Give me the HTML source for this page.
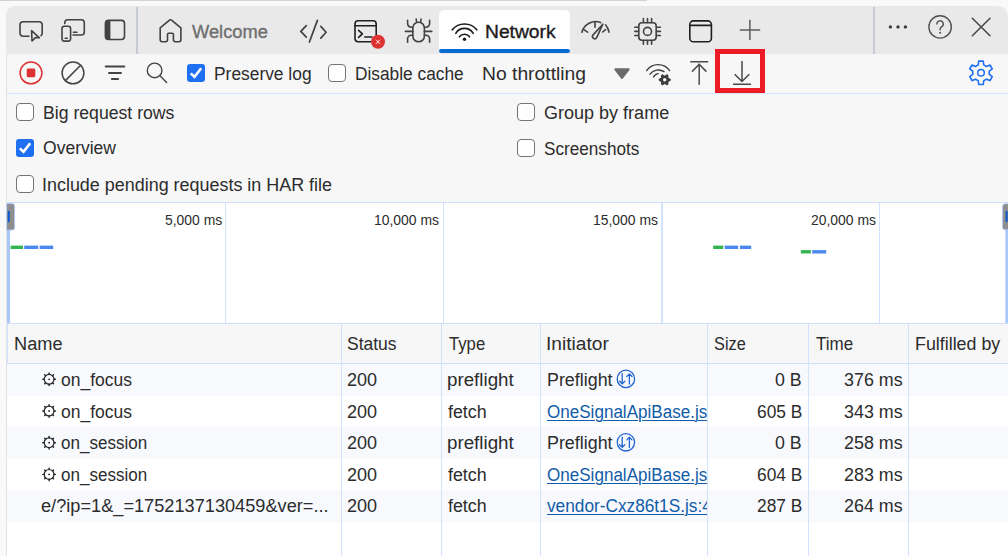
<!DOCTYPE html>
<html><head><meta charset="utf-8">
<style>
*{box-sizing:border-box;margin:0;padding:0}
html,body{width:1008px;height:556px;overflow:hidden;background:#f9f9f9;font-family:"Liberation Sans",sans-serif;color:#1b1b1b;position:relative}
.a{position:absolute}
.t{position:absolute;white-space:pre;line-height:20px}
.cb{position:absolute;width:18px;height:18px;border:1.7px solid #747474;border-radius:4px;background:#fff}
.sb{-webkit-text-stroke:0.35px currentColor}
.lnk{text-decoration:underline;text-decoration-thickness:1px;text-underline-offset:2px}
.clip{position:absolute;left:541px;width:166px;height:31px;overflow:hidden}
#ov{position:absolute;left:0;top:0;width:1008px;height:556px;overflow:visible}
</style></head><body>
<!-- chrome -->
<div class="a" style="left:0;top:0;width:647px;height:1px;background:#d2d2d2;border-radius:0 1px 1px 0"></div>
<div class="a" style="left:6px;top:6px;width:1002px;height:47.6px;background:#e9e9e9;border-radius:9px 10px 0 0"></div>
<div class="a" style="left:6px;top:53.6px;width:1002px;height:503px;background:#f7f7f7;border-left:1px solid #e2e2e2"></div>
<div class="a" style="left:7px;top:93px;width:1001px;height:1px;background:#d6e5fc"></div>
<!-- timeline -->
<div class="a" style="left:7px;top:202px;width:1001px;height:121px;background:#fff;border-top:1px solid #cddffb"></div>
<div class="a" style="left:224.6px;top:203px;width:1.4px;height:120px;background:#d3e3fd"></div>
<div class="a" style="left:442.6px;top:203px;width:1.6px;height:120px;background:#d3e3fd"></div>
<div class="a" style="left:661.2px;top:203px;width:1.6px;height:120px;background:#d3e3fd"></div>
<div class="a" style="left:879.2px;top:203px;width:1.2px;height:120px;background:#d3e3fd"></div>
<!-- table -->
<div class="a" style="left:7px;top:323px;width:1001px;height:41px;background:#f7f7f7;border-top:1px solid #cddffb;border-bottom:1px solid #cddffb;border-left:1px solid #d3e3fd"></div>
<div class="a" style="left:7px;top:364px;width:1001px;height:192px;background:#fff"></div>
<div class="a" style="left:7px;top:364px;width:1001px;height:31.5px;background:#f7f9fd"></div>
<div class="a" style="left:7px;top:427px;width:1001px;height:31.5px;background:#f7f9fd"></div>
<div class="a" style="left:7px;top:490px;width:1001px;height:31.5px;background:#f7f9fd"></div>
<div class="a" style="left:341px;top:324px;width:1px;height:232px;background:#d3e3fd"></div>
<div class="a" style="left:441px;top:324px;width:1px;height:232px;background:#d3e3fd"></div>
<div class="a" style="left:540px;top:324px;width:1px;height:232px;background:#d3e3fd"></div>
<div class="a" style="left:707px;top:324px;width:1px;height:232px;background:#d3e3fd"></div>
<div class="a" style="left:808px;top:324px;width:1px;height:232px;background:#d3e3fd"></div>
<div class="a" style="left:908px;top:324px;width:1px;height:232px;background:#d3e3fd"></div>
<!-- tab strip -->
<div class="a" style="left:136.2px;top:7px;width:1.6px;height:47px;background:#c5cad3"></div>
<div class="a" style="left:873.4px;top:7px;width:1.6px;height:47px;background:#c5cad3"></div>
<div class="a" style="left:439px;top:10px;width:131px;height:43px;background:#fff;border-radius:5px 5px 0 0"></div>
<div class="a" style="left:439px;top:49px;width:131px;height:4px;background:#0a6cd2;border-radius:2px"></div>
<!-- checkboxes -->
<div class="a" style="left:187px;top:64px;width:18px;height:18px;border-radius:3px;background:#1f6ff2"></div>
<div class="cb" style="left:328px;top:64px"></div>
<div class="cb" style="left:16px;top:103px"></div>
<div class="a" style="left:16px;top:139px;width:18px;height:18px;border-radius:3px;background:#1f6ff2"></div>
<div class="cb" style="left:16px;top:175px"></div>
<div class="cb" style="left:517px;top:103px"></div>
<div class="cb" style="left:517px;top:139px"></div>
<div class="t sb" style="left:191.90px;top:21.60px;font-size:17.6px;color:#6f6f6f;transform:scaleX(1.0389);transform-origin:left center">Welcome</div>
<div class="t sb" style="left:485.41px;top:21.60px;font-size:17.6px;color:#1b1b1b;transform:scaleX(1.0937);transform-origin:left center">Network</div>
<div class="t" style="left:213.71px;top:63.70px;font-size:17.6px;color:#2c2c2c;transform:scaleX(0.9876);transform-origin:left center">Preserve log</div>
<div class="t" style="left:354.72px;top:63.50px;font-size:17.6px;color:#2c2c2c;transform:scaleX(0.9835);transform-origin:left center">Disable cache</div>
<div class="t" style="left:482.40px;top:63.60px;font-size:17.6px;color:#2c2c2c;transform:scaleX(1.0968);transform-origin:left center">No throttling</div>
<div class="t" style="left:43.00px;top:102.70px;font-size:17.6px;color:#2c2c2c;transform:scaleX(1.0031);transform-origin:left center">Big request rows</div>
<div class="t" style="left:43.00px;top:138.40px;font-size:17.6px;color:#2c2c2c;transform:scaleX(0.9958);transform-origin:left center">Overview</div>
<div class="t" style="left:41.86px;top:174.70px;font-size:17.6px;color:#2c2c2c;transform:scaleX(1.0191);transform-origin:left center">Include pending requests in HAR file</div>
<div class="t" style="left:543.58px;top:102.80px;font-size:17.6px;color:#2c2c2c;transform:scaleX(1.0240);transform-origin:left center">Group by frame</div>
<div class="t" style="left:543.62px;top:138.50px;font-size:17.6px;color:#2c2c2c;transform:scaleX(0.9750);transform-origin:left center">Screenshots</div>
<div class="t" style="left:164.66px;top:210.35px;font-size:14px;color:#2c2c2c;transform:scaleX(0.9929);transform-origin:left center">5,000 ms</div>
<div class="t" style="left:374.06px;top:210.35px;font-size:14px;color:#2c2c2c;transform:scaleX(0.9929);transform-origin:left center">10,000 ms</div>
<div class="t" style="left:593.06px;top:210.35px;font-size:14px;color:#2c2c2c;transform:scaleX(0.9929);transform-origin:left center">15,000 ms</div>
<div class="t" style="left:810.56px;top:210.35px;font-size:14px;color:#2c2c2c;transform:scaleX(0.9929);transform-origin:left center">20,000 ms</div>
<div class="t" style="left:13.67px;top:334.10px;font-size:17.6px;color:#2c2c2c;transform:scaleX(1.0333);transform-origin:left center">Name</div>
<div class="t" style="left:347.31px;top:334.10px;font-size:17.6px;color:#2c2c2c;transform:scaleX(0.9938);transform-origin:left center">Status</div>
<div class="t" style="left:448.60px;top:334.10px;font-size:17.6px;color:#2c2c2c;transform:scaleX(0.9486);transform-origin:left center">Type</div>
<div class="t" style="left:545.52px;top:334.10px;font-size:17.6px;color:#2c2c2c;transform:scaleX(1.0893);transform-origin:left center">Initiator</div>
<div class="t" style="left:713.77px;top:334.10px;font-size:17.6px;color:#2c2c2c;transform:scaleX(0.9273);transform-origin:left center">Size</div>
<div class="t" style="left:816.20px;top:334.10px;font-size:17.6px;color:#2c2c2c;transform:scaleX(0.9658);transform-origin:left center">Time</div>
<div class="t" style="left:914.59px;top:334.10px;font-size:17.6px;color:#2c2c2c;transform:scaleX(1.0133);transform-origin:left center">Fulfilled by</div>
<div class="t" style="left:61.01px;top:369.80px;font-size:17.6px;color:#2c2c2c;transform:scaleX(0.9929);transform-origin:left center">on_focus</div>
<div class="t" style="left:347.28px;top:369.80px;font-size:17.6px;color:#2c2c2c;transform:scaleX(1.0250);transform-origin:left center">200</div>
<div class="t" style="left:447.23px;top:369.80px;font-size:17.6px;color:#2c2c2c;transform:scaleX(1.0661);transform-origin:left center">preflight</div>
<div class="t" style="left:546.78px;top:369.80px;font-size:17.6px;color:#2c2c2c;transform:scaleX(1.0156);transform-origin:left center">Preflight</div>
<div class="t" style="left:775.43px;top:369.80px;font-size:17.6px;color:#2c2c2c;transform:scaleX(1.0102);transform-origin:left center">0 B</div>
<div class="t" style="left:843.78px;top:369.80px;font-size:17.6px;color:#2c2c2c;transform:scaleX(1.0161);transform-origin:left center">376 ms</div>
<div class="t" style="left:61.01px;top:401.50px;font-size:17.6px;color:#2c2c2c;transform:scaleX(0.9929);transform-origin:left center">on_focus</div>
<div class="t" style="left:347.28px;top:401.50px;font-size:17.6px;color:#2c2c2c;transform:scaleX(1.0250);transform-origin:left center">200</div>
<div class="t" style="left:448.30px;top:401.50px;font-size:17.6px;color:#2c2c2c;transform:scaleX(1.0135);transform-origin:left center">fetch</div>
<div class="clip" style="top:397px"><div class="t lnk" style="left:5.83px;top:4.50px;font-size:17.6px;color:#115ca8;transform:scaleX(0.9695);transform-origin:left center">OneSignalApiBase.js</div></div>
<div class="t" style="left:757.31px;top:401.50px;font-size:17.6px;color:#2c2c2c;transform:scaleX(0.9864);transform-origin:left center">605 B</div>
<div class="t" style="left:843.78px;top:401.50px;font-size:17.6px;color:#2c2c2c;transform:scaleX(1.0161);transform-origin:left center">343 ms</div>
<div class="t" style="left:61.03px;top:433.20px;font-size:17.6px;color:#2c2c2c;transform:scaleX(0.9678);transform-origin:left center">on_session</div>
<div class="t" style="left:347.28px;top:433.20px;font-size:17.6px;color:#2c2c2c;transform:scaleX(1.0250);transform-origin:left center">200</div>
<div class="t" style="left:447.23px;top:433.20px;font-size:17.6px;color:#2c2c2c;transform:scaleX(1.0661);transform-origin:left center">preflight</div>
<div class="t" style="left:546.78px;top:433.20px;font-size:17.6px;color:#2c2c2c;transform:scaleX(1.0156);transform-origin:left center">Preflight</div>
<div class="t" style="left:775.43px;top:433.20px;font-size:17.6px;color:#2c2c2c;transform:scaleX(1.0102);transform-origin:left center">0 B</div>
<div class="t" style="left:843.78px;top:433.20px;font-size:17.6px;color:#2c2c2c;transform:scaleX(1.0161);transform-origin:left center">258 ms</div>
<div class="t" style="left:61.03px;top:465.00px;font-size:17.6px;color:#2c2c2c;transform:scaleX(0.9678);transform-origin:left center">on_session</div>
<div class="t" style="left:347.28px;top:465.00px;font-size:17.6px;color:#2c2c2c;transform:scaleX(1.0250);transform-origin:left center">200</div>
<div class="t" style="left:448.30px;top:465.00px;font-size:17.6px;color:#2c2c2c;transform:scaleX(1.0135);transform-origin:left center">fetch</div>
<div class="clip" style="top:460px"><div class="t lnk" style="left:5.83px;top:5.00px;font-size:17.6px;color:#115ca8;transform:scaleX(0.9695);transform-origin:left center">OneSignalApiBase.js</div></div>
<div class="t" style="left:757.31px;top:465.00px;font-size:17.6px;color:#2c2c2c;transform:scaleX(0.9864);transform-origin:left center">604 B</div>
<div class="t" style="left:843.78px;top:465.00px;font-size:17.6px;color:#2c2c2c;transform:scaleX(1.0161);transform-origin:left center">283 ms</div>
<div class="t" style="left:40.67px;top:496.10px;font-size:17.6px;color:#2c2c2c;transform:scaleX(1.0333);transform-origin:left center">e/?ip=1&amp;_=1752137130459&amp;ver=...</div>
<div class="t" style="left:347.28px;top:496.10px;font-size:17.6px;color:#2c2c2c;transform:scaleX(1.0250);transform-origin:left center">200</div>
<div class="t" style="left:448.30px;top:496.10px;font-size:17.6px;color:#2c2c2c;transform:scaleX(1.0135);transform-origin:left center">fetch</div>
<div class="clip" style="top:491px"><div class="t lnk" style="left:6.00px;top:5.10px;font-size:17.6px;color:#115ca8;transform:scaleX(0.9800);transform-origin:left center">vendor-Cxz86t1S.js:4</div></div>
<div class="t" style="left:757.31px;top:496.10px;font-size:17.6px;color:#2c2c2c;transform:scaleX(0.9864);transform-origin:left center">287 B</div>
<div class="t" style="left:843.78px;top:496.10px;font-size:17.6px;color:#2c2c2c;transform:scaleX(1.0161);transform-origin:left center">264 ms</div>
<svg id="ov" width="1008" height="556" viewBox="0 0 1008 556" fill="none" stroke-linecap="round" stroke-linejoin="round">
<!-- inspect -->
<g stroke="#424242" stroke-width="1.6">
<path d="M29 36.2 H23 a3 3 0 0 1 -3 -3 V24.8 a3 3 0 0 1 3 -3 H39.2 a3 3 0 0 1 3 3 V33.2 a3 3 0 0 1 -1.2 2.4"/>
<path d="M31.6 30.6 L39.4 37.8 L35.4 37.6 L32 41 Z"/>
</g>
<!-- device -->
<g stroke="#424242" stroke-width="1.6">
<path d="M64.8 23.6 V22.8 a3 3 0 0 1 3 -3 H81.3 a3 3 0 0 1 3 3 V32 a3 3 0 0 1 -3 3 H73"/>
<rect x="62" y="26.3" width="8.6" height="14.8" rx="2.3"/>
<path d="M73.4 32.3 H76.9 M65.2 38.3 H67.3"/>
</g>
<!-- sidebar -->
<g stroke="#424242" stroke-width="1.6">
<rect x="105.4" y="20.4" width="19.1" height="19.1" rx="3.2"/>
</g>
<path d="M108.6 20.4 H110.4 V39.5 H108.6 a3.2 3.2 0 0 1 -3.2 -3.2 V23.6 a3.2 3.2 0 0 1 3.2 -3.2Z" fill="#424242"/>
<!-- home -->
<path stroke="#424242" stroke-width="1.6" d="M169.2 20.3 L160.2 27.8 V39.8 a1.9 1.9 0 0 0 1.9 1.9 H165.6 a1.9 1.9 0 0 0 1.9 -1.9 V34.4 a1.2 1.2 0 0 1 1.2 -1.2 H172.2 a1.2 1.2 0 0 1 1.2 1.2 V39.8 a1.9 1.9 0 0 0 1.9 1.9 H179 a1.9 1.9 0 0 0 1.9 -1.9 V27.8 L171.8 20.3 Q170.5 19.2 169.2 20.3 Z"/>
<!-- code -->
<g stroke="#424242" stroke-width="1.7">
<path d="M306.3 25.6 L300.8 31.3 L306.3 37.2"/>
<path d="M317.4 20.4 L309.4 42"/>
<path d="M320.8 26.4 L326.1 32.2 L320.8 38.1"/>
</g>
<!-- console -->
<g stroke="#1f1f1f" stroke-width="1.6">
<path d="M376.2 35 V24 a3.2 3.2 0 0 0 -3.2 -3.2 H358.2 a3.2 3.2 0 0 0 -3.2 3.2 V38.6 a3.2 3.2 0 0 0 3.2 3.2 H371"/>
<path d="M355 25.7 H376.2"/>
<path d="M358.6 30.3 L362.4 33.8 L358.6 37.4"/>
<path d="M364.8 37 H372"/>
</g>
<circle cx="378" cy="41.8" r="7" fill="#dc3232"/>
<path d="M376.2 40 L379.8 43.6 M379.8 40 L376.2 43.6" stroke="#fff" stroke-width="0.9"/>
<!-- bug -->
<g stroke="#424242" stroke-width="1.6">
<rect x="412.8" y="22.2" width="11.6" height="19.6" rx="5.8"/>
<path d="M416.2 19 L416.6 22.4 M421 19 L420.6 22.4"/>
<path d="M407.6 20.2 V23.6 a3.6 3.6 0 0 0 3.6 3.6 H412.8"/>
<path d="M429.6 20.2 V23.6 a3.6 3.6 0 0 1 -3.6 3.6 H424.4"/>
<path d="M405.4 31.4 H412.8 M424.4 31.4 H431.8"/>
<path d="M407.6 42.2 V38.8 a3.6 3.6 0 0 1 3.6 -3.6 H412.8"/>
<path d="M429.6 42.2 V38.8 a3.6 3.6 0 0 0 -3.6 -3.6 H424.4"/>
</g>
<!-- wifi -->
<g stroke="#1b1b1b" stroke-width="1.6">
<path d="M452.2 29.8 A16 16 0 0 1 476.8 29.8"/>
<path d="M455.8 33.4 A10 10 0 0 1 473.2 33.4"/>
<path d="M459.4 36.8 A6.4 6.4 0 0 1 469.6 36.8"/>
</g>
<circle cx="464.5" cy="39.2" r="1.7" fill="#1b1b1b"/>
<!-- performance -->
<g stroke="#424242" stroke-width="1.6">
<path d="M581.9 32.2 A14 14 0 0 1 600.6 22.6"/>
<path d="M605.5 24.8 A14 14 0 0 1 609 32.2"/>
<path d="M595 22.4 V27.2 M583.8 29.6 L587.6 32.2 M605.6 29.6 L602.6 32"/>
<path d="M602.8 24.2 L596.6 37.8 a2.3 2.3 0 0 1 -3.9 -2.4 Z"/>
</g>
<!-- cpu -->
<g stroke="#424242" stroke-width="1.6">
<rect x="638.8" y="22.8" width="17.4" height="17.4" rx="3.2"/>
<circle cx="647.5" cy="31.4" r="4"/>
<path d="M643.4 18.6 V22.4 M647.5 18.6 V22.4 M651.6 18.6 V22.4 M643.4 40.6 V44.2 M647.5 40.6 V44.2 M651.6 40.6 V44.2"/>
<path d="M634.8 27.3 H638.4 M634.8 31.4 H638.4 M634.8 35.5 H638.4 M656.6 27.3 H660.4 M656.6 31.4 H660.4 M656.6 35.5 H660.4"/>
</g>
<!-- window -->
<g stroke="#1f1f1f" stroke-width="1.6">
<rect x="689.8" y="20.9" width="21.6" height="20.9" rx="3.6"/>
<path d="M689.8 25.4 H711.4"/>
</g>
<!-- plus -->
<path stroke="#5c5c5c" stroke-width="1.5" stroke-linecap="butt" d="M739.8 29.9 H760.2 M749.9 19.8 V40"/>
<!-- dots -->
<g fill="#3a3a3a"><circle cx="890.4" cy="26.9" r="1.7"/><circle cx="898" cy="26.9" r="1.7"/><circle cx="905.4" cy="26.9" r="1.7"/></g>
<!-- help -->
<circle cx="940.1" cy="26.9" r="11.2" stroke="#505050" stroke-width="1.4"/>
<path d="M936.9 24 a3.2 3.2 0 1 1 4.7 2.8 c-1 0.6 -1.5 1.2 -1.5 2.4 v0.6" stroke="#505050" stroke-width="1.4"/>
<circle cx="940.1" cy="32.8" r="1" fill="#505050"/>
<!-- close -->
<path stroke="#444" stroke-width="1.5" d="M972.3 18.2 L990 35.8 M990 18.2 L972.3 35.8"/>

<!-- toolbar -->
<circle cx="31" cy="72.9" r="10.9" stroke="#dc3232" stroke-width="1.5"/>
<rect x="26.7" y="68.6" width="8.6" height="8.6" rx="1.4" fill="#dc3232"/>
<circle cx="73" cy="72.9" r="10.9" stroke="#444" stroke-width="1.5"/>
<path d="M80.7 65.2 L65.3 80.6" stroke="#444" stroke-width="1.5"/>
<path d="M105.7 66.4 H124.3 M109 72.9 H121 M111.9 79.1 H118.1" stroke="#444" stroke-width="2"/>
<circle cx="154.6" cy="70.4" r="7.3" stroke="#444" stroke-width="1.4"/>
<path d="M159.8 75.6 L166.6 82.6" stroke="#444" stroke-width="1.4"/>
<path d="M190.8 73.4 L194.5 76.8 L201.2 68.2" stroke="#fff" stroke-width="2.6" stroke-linecap="butt" stroke-linejoin="miter"/>
<path d="M615.4 69.3 H628.6 L622 77.9 Z" fill="#6b6b6b" stroke="#6b6b6b" stroke-width="2.2"/>
<g stroke="#3c3c3c" stroke-width="1.4">
<path d="M646.6 70.6 A14 14 0 0 1 669.6 70.6"/>
<path d="M650 74.2 A10.5 10.5 0 0 1 664 71.6"/>
<path d="M653.6 77 A5.6 5.6 0 0 1 658.2 73.6"/>
</g>
<g transform="translate(664.7 79.8)">
<path d="M3.56 -1.59 L5.57 -0.59 L5.57 0.59 L3.56 1.59 L3.16 2.29 L3.29 4.53 L2.28 5.12 L0.41 3.88 L-0.41 3.88 L-2.28 5.12 L-3.29 4.53 L-3.16 2.29 L-3.56 1.59 L-5.57 0.59 L-5.57 -0.59 L-3.56 -1.59 L-3.16 -2.29 L-3.29 -4.53 L-2.28 -5.12 L-0.41 -3.88 L0.41 -3.88 L2.28 -5.12 L3.29 -4.53 L3.16 -2.29 Z" fill="#3c3c3c" stroke="#3c3c3c" stroke-width="1"/>
<circle r="1.7" fill="#f7f7f7"/>
</g>
<path d="M690.2 61.7 H708.2 M699.2 63.4 V84.8 M692 71.6 L699.2 64.3 L706.4 71.6" stroke="#4a4a4a" stroke-width="1.5" stroke-linecap="butt"/>
<path d="M742 61 V81.8 M734.7 74.3 L742 81.5 L749.3 74.3 M733 84.2 H751" stroke="#4a4a4a" stroke-width="1.5" stroke-linecap="butt"/>
<rect x="717.5" y="51.5" width="45" height="39" stroke="#ec1c24" stroke-width="5" stroke-linejoin="miter"/>
<!-- settings gear -->
<path stroke="#1f6ff2" stroke-width="1.6" d="M978.27 64.86 L978.73 61.12 L983.27 61.12 L983.73 64.86 L986.51 66.46 L989.98 64.99 L992.25 68.93 L989.25 71.20 L989.25 74.40 L992.25 76.67 L989.98 80.61 L986.51 79.14 L983.73 80.74 L983.27 84.48 L978.73 84.48 L978.27 80.74 L975.49 79.14 L972.02 80.61 L969.75 76.67 L972.75 74.40 L972.75 71.20 L969.75 68.93 L972.02 64.99 L975.49 66.46 Z"/>
<circle cx="981" cy="72.8" r="3.3" stroke="#1f6ff2" stroke-width="1.5"/>

<!-- settings checkmarks -->
<path d="M19.8 148.4 L23.5 151.8 L30.2 143.2" stroke="#fff" stroke-width="2.6" stroke-linecap="butt" stroke-linejoin="miter"/>

<!-- timeline handles -->
<rect x="7" y="230" width="3" height="93" fill="#a8c7fa"/>
<path d="M7 203.6 H12 a2.6 2.6 0 0 1 2.6 2.6 V227.4 a2.6 2.6 0 0 1 -2.6 2.6 H7 Z" fill="#8e8e8e" stroke="#a8c7fa" stroke-width="0.8"/>
<rect x="7.8" y="211" width="2" height="11" fill="#0b57d0"/>
<rect x="1005.4" y="230" width="2.6" height="93" fill="#a8c7fa"/>
<path d="M1009 203.8 H1005.2 a2.6 2.6 0 0 0 -2.6 2.6 V227.2 a2.6 2.6 0 0 0 2.6 2.6 H1009 Z" fill="#8e8e8e" stroke="#a8c7fa" stroke-width="0.8"/>
<rect x="1005.6" y="211" width="2" height="11" fill="#0b57d0"/>
<g>
<rect x="10.6" y="245.6" width="12.4" height="3.4" fill="#33b552"/>
<rect x="24.2" y="245.6" width="14" height="3.4" fill="#4a8af0"/>
<rect x="39.6" y="245.6" width="13.6" height="3.4" fill="#4a8af0"/>
<rect x="713.2" y="245.6" width="10" height="3.4" fill="#33b552"/>
<rect x="724.6" y="245.6" width="13.6" height="3.4" fill="#4a8af0"/>
<rect x="740" y="245.6" width="11.2" height="3.4" fill="#4a8af0"/>
<rect x="800.8" y="250.1" width="10" height="3.4" fill="#33b552"/>
<rect x="812.2" y="250.1" width="14" height="3.4" fill="#4a8af0"/>
</g>
<!-- row icons -->
<circle cx="49.1" cy="379.3" r="4.9" stroke="#262626" stroke-width="1.2"/>
<path d="M54.00 379.30 L55.40 379.30" stroke="#262626" stroke-width="1.4"/>
<path d="M52.56 382.76 L53.55 383.75" stroke="#262626" stroke-width="1.4"/>
<path d="M49.10 384.20 L49.10 385.60" stroke="#262626" stroke-width="1.4"/>
<path d="M45.64 382.76 L44.65 383.75" stroke="#262626" stroke-width="1.4"/>
<path d="M44.20 379.30 L42.80 379.30" stroke="#262626" stroke-width="1.4"/>
<path d="M45.64 375.84 L44.65 374.85" stroke="#262626" stroke-width="1.4"/>
<path d="M49.10 374.40 L49.10 373.00" stroke="#262626" stroke-width="1.4"/>
<path d="M52.56 375.84 L53.55 374.85" stroke="#262626" stroke-width="1.4"/>
<circle cx="49.1" cy="379.3" r="0.9" fill="#262626"/>
<circle cx="49.1" cy="411" r="4.9" stroke="#262626" stroke-width="1.2"/>
<path d="M54.00 411.00 L55.40 411.00" stroke="#262626" stroke-width="1.4"/>
<path d="M52.56 414.46 L53.55 415.45" stroke="#262626" stroke-width="1.4"/>
<path d="M49.10 415.90 L49.10 417.30" stroke="#262626" stroke-width="1.4"/>
<path d="M45.64 414.46 L44.65 415.45" stroke="#262626" stroke-width="1.4"/>
<path d="M44.20 411.00 L42.80 411.00" stroke="#262626" stroke-width="1.4"/>
<path d="M45.64 407.54 L44.65 406.55" stroke="#262626" stroke-width="1.4"/>
<path d="M49.10 406.10 L49.10 404.70" stroke="#262626" stroke-width="1.4"/>
<path d="M52.56 407.54 L53.55 406.55" stroke="#262626" stroke-width="1.4"/>
<circle cx="49.1" cy="411" r="0.9" fill="#262626"/>
<circle cx="49.1" cy="442.7" r="4.9" stroke="#262626" stroke-width="1.2"/>
<path d="M54.00 442.70 L55.40 442.70" stroke="#262626" stroke-width="1.4"/>
<path d="M52.56 446.16 L53.55 447.15" stroke="#262626" stroke-width="1.4"/>
<path d="M49.10 447.60 L49.10 449.00" stroke="#262626" stroke-width="1.4"/>
<path d="M45.64 446.16 L44.65 447.15" stroke="#262626" stroke-width="1.4"/>
<path d="M44.20 442.70 L42.80 442.70" stroke="#262626" stroke-width="1.4"/>
<path d="M45.64 439.24 L44.65 438.25" stroke="#262626" stroke-width="1.4"/>
<path d="M49.10 437.80 L49.10 436.40" stroke="#262626" stroke-width="1.4"/>
<path d="M52.56 439.24 L53.55 438.25" stroke="#262626" stroke-width="1.4"/>
<circle cx="49.1" cy="442.7" r="0.9" fill="#262626"/>
<circle cx="49.1" cy="474.4" r="4.9" stroke="#262626" stroke-width="1.2"/>
<path d="M54.00 474.40 L55.40 474.40" stroke="#262626" stroke-width="1.4"/>
<path d="M52.56 477.86 L53.55 478.85" stroke="#262626" stroke-width="1.4"/>
<path d="M49.10 479.30 L49.10 480.70" stroke="#262626" stroke-width="1.4"/>
<path d="M45.64 477.86 L44.65 478.85" stroke="#262626" stroke-width="1.4"/>
<path d="M44.20 474.40 L42.80 474.40" stroke="#262626" stroke-width="1.4"/>
<path d="M45.64 470.94 L44.65 469.95" stroke="#262626" stroke-width="1.4"/>
<path d="M49.10 469.50 L49.10 468.10" stroke="#262626" stroke-width="1.4"/>
<path d="M52.56 470.94 L53.55 469.95" stroke="#262626" stroke-width="1.4"/>
<circle cx="49.1" cy="474.4" r="0.9" fill="#262626"/>
<circle cx="625.9" cy="378.9" r="8.7" stroke="#2264d1" stroke-width="1.3"/>
<path d="M622.2 373.7 V383.9 M619.6 381.3 L622.2 383.9 L624.8 381.3" stroke="#2264d1" stroke-width="1.3"/>
<path d="M629.4 384.1 V373.9 M626.8 376.5 L629.4 373.9 L632 376.5" stroke="#2264d1" stroke-width="1.3"/>
<circle cx="625.9" cy="442.3" r="8.7" stroke="#2264d1" stroke-width="1.3"/>
<path d="M622.2 437.1 V447.3 M619.6 444.7 L622.2 447.3 L624.8 444.7" stroke="#2264d1" stroke-width="1.3"/>
<path d="M629.4 447.5 V437.3 M626.8 439.9 L629.4 437.3 L632 439.9" stroke="#2264d1" stroke-width="1.3"/>
</svg>

</body></html>
